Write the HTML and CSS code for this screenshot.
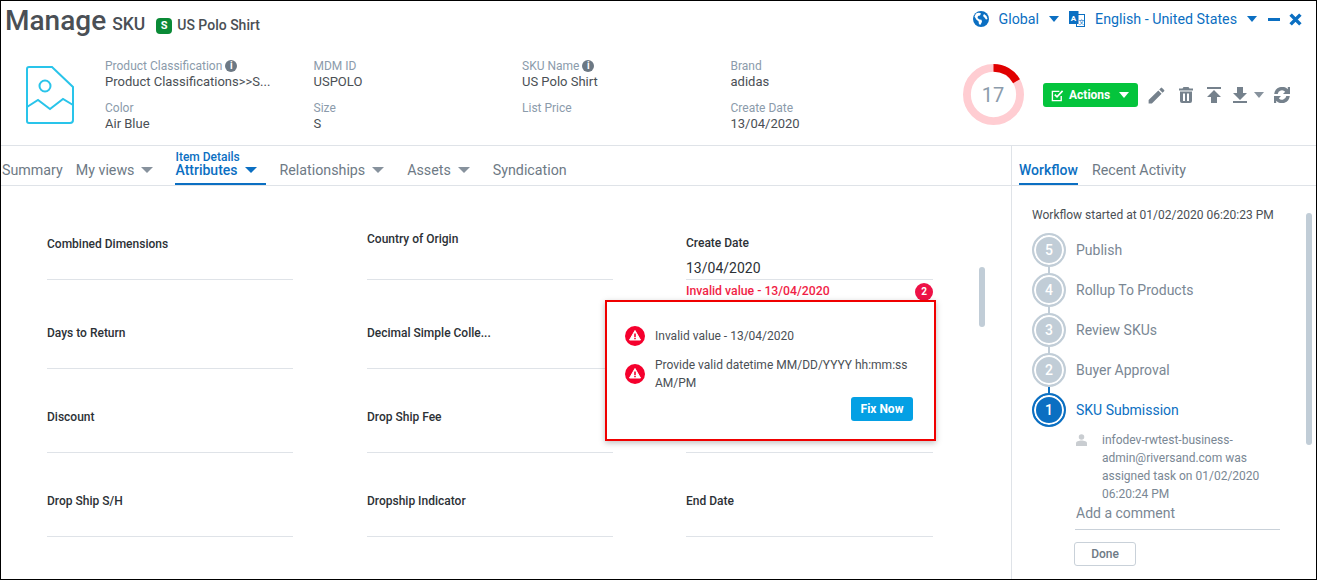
FILE: index.html
```html
<!DOCTYPE html>
<html lang="en">
<head>
<meta charset="utf-8">
<title>Manage SKU</title>
<link rel="stylesheet" href="styles.css">
</head>
<body>
<div class="app">
  <header class="head">
    <div class="title-row">
      <h1 class="title">Manage</h1>
      <span class="entity">SKU</span>
      <span class="type-badge">S</span>
      <span class="item-name">US Polo Shirt</span>
      <div class="context">
        <svg class="ctx-globe" viewBox="0 0 16 16"><circle cx="8" cy="8" r="8" fill="#0b6fc2"/><path d="M3 2.500c2-1.200 4-1 5 0l-1 2-2 .5-.5 2 2 1.500 2 .2.5 2-1.500 3-1.500-.5-.5-3-2-1.500-2-3.200zM11 3l2.500 2 1 3-1.500.5-1.500-2-1.500-1.500z" fill="#fff"/></svg>
        <span class="ctx-text ctx-global">Global</span>
        <span class="caret caret-blue ctx-caret"></span>
        <svg class="ctx-lang" viewBox="0 0 16 16"><rect x="7.500" y="3.500" width="8" height="12" fill="#fff" stroke="#0b6fc2"/><rect x="0" y="0" width="9.500" height="13" fill="#0b6fc2"/><text x="1.800" y="10" class="lang-a">A</text><text x="9.500" y="12.500" class="lang-b">文</text></svg>
        <span class="ctx-text ctx-english">English - United States</span>
        <span class="caret caret-blue ctx-caret2"></span>
        <span class="minimize"></span>
        <svg class="close" viewBox="0 0 12 12"><path d="M1.500 1.500l9 9M10.500 1.500l-9 9" stroke="#0b6fc2" stroke-width="3.200" fill="none"/></svg>
      </div>
    </div>
    <div class="info-row">
      <svg class="file-icon" viewBox="0 0 48 58" fill="none" stroke="#29c4ea" stroke-width="2"><path d="M3 1h23l21 20v33a3 3 0 0 1-3 3H3a2 2 0 0 1-2-2V3a2 2 0 0 1 2-2z"/><circle cx="19" cy="20" r="5.500"/><path d="M1 41l11-7 12 9 13-10 10 6"/></svg>
      <div class="info-grid">
        <div class="field"><div class="lbl">Product Classification <span class="i">i</span></div><div class="val">Product Classifications&gt;&gt;S...</div></div>
        <div class="field"><div class="lbl">MDM ID</div><div class="val">USPOLO</div></div>
        <div class="field"><div class="lbl">SKU Name <span class="i">i</span></div><div class="val">US Polo Shirt</div></div>
        <div class="field"><div class="lbl">Brand</div><div class="val">adidas</div></div>
        <div class="field"><div class="lbl">Color</div><div class="val">Air Blue</div></div>
        <div class="field"><div class="lbl">Size</div><div class="val">S</div></div>
        <div class="field"><div class="lbl">List Price</div><div class="val"></div></div>
        <div class="field"><div class="lbl">Create Date</div><div class="val">13/04/2020</div></div>
      </div>
      <div class="score">
        <svg viewBox="0 0 62 62"><circle cx="31" cy="31" r="27" fill="none" stroke="#ffcdd2" stroke-width="8"/><path d="M31 4A27 27 0 0 1 54.400 17.500" fill="none" stroke="#e00000" stroke-width="8"/></svg>
        <span class="score-num">17</span>
      </div>
      <div class="actions">
        <button class="btn-actions">
          <svg viewBox="0 0 14 14" fill="none" stroke="#fff" stroke-width="1.500"><path d="M11 7.500V12.500H1.500V2.500H9"/><path d="M4 6l2.500 2.500L12.500 2" stroke-width="1.800"/></svg>
          <span>Actions</span>
          <span class="caret caret-white"></span>
        </button>
        <svg class="tool t-edit" viewBox="0 0 24 24"><path d="M3 17.250V21h3.750L17.810 9.940l-3.750-3.750zM20.710 7.040a1 1 0 0 0 0-1.410l-2.340-2.340a1 1 0 0 0-1.410 0l-1.830 1.830 3.750 3.750z"/></svg>
        <svg class="tool t-del" viewBox="0 0 14 16"><path d="M4.500 0h5l1 1.500H14V3.500H0V1.500h3.500zM1 4.500h12V14a2 2 0 0 1-2 2H3a2 2 0 0 1-2-2zM4 6.500V14h2V6.500zM8 6.500V14h2V6.500z" fill-rule="evenodd"/></svg>
        <svg class="tool t-up" viewBox="0 0 14 16"><path d="M0 0h14v2H0zM7 3l7 7H10v6H4v-6H0z"/></svg>
        <svg class="tool t-down" viewBox="0 0 14 16"><path d="M4 0h6v6h4l-7 7-7-7h4zM0 14h14v2H0z"/></svg>
        <span class="caret caret-grey t-caret"></span>
        <svg class="tool t-ref" viewBox="0 0 16 16"><path d="M13.800 2.200V0L16 0v7H9l2.200-2.200A4.300 4.300 0 0 0 3.700 7H.2A8 8 0 0 1 13.800 2.200zM2.200 13.800V16H0V9h7l-2.200 2.200A4.300 4.300 0 0 0 12.300 9h3.500A8 8 0 0 1 2.200 13.800z"/></svg>
      </div>
    </div>
  </header>
  <div class="body">
    <main class="main">
      <nav class="tabs">
        <span class="tab">Summary</span>
        <span class="tab tab-menu">My views<span class="caret caret-grey"></span></span>
        <span class="tab tab-on"><span class="tab-over">Item Details</span>Attributes<span class="caret caret-blue"></span></span>
        <span class="tab tab-menu">Relationships<span class="caret caret-grey"></span></span>
        <span class="tab tab-menu">Assets<span class="caret caret-grey"></span></span>
        <span class="tab">Syndication</span>
      </nav>
      <div class="form-area">
        <div class="form">
          <div class="cell"><div class="flabel l-a">Combined Dimensions</div></div>
          <div class="cell"><div class="flabel l-b">Country of Origin</div></div>
          <div class="cell"><div class="flabel l-c">Create Date</div><div class="fval">13/04/2020</div>
            <div class="err">Invalid value - 13/04/2020<span class="err-count">2</span></div></div>
          <div class="cell"><div class="flabel">Days to Return</div></div>
          <div class="cell"><div class="flabel l-d">Decimal Simple Colle...</div></div>
          <div class="cell"></div>
          <div class="cell"><div class="flabel">Discount</div></div>
          <div class="cell"><div class="flabel">Drop Ship Fee</div></div>
          <div class="cell"></div>
          <div class="cell"><div class="flabel">Drop Ship S/H</div></div>
          <div class="cell"><div class="flabel">Dropship Indicator</div></div>
          <div class="cell"><div class="flabel">End Date</div></div>
        </div>
        <div class="form-scroll"></div>
        <div class="popover">
          <div class="msg">
            <svg class="warn" viewBox="0 0 20 20"><circle cx="10" cy="10" r="10" fill="#f5002d"/><path d="M10 4.500l5.500 9.500h-11z" fill="#fff" stroke="#fff" stroke-linejoin="round"/><path d="M9.200 7.500h1.600v3.500H9.200zM9.200 11.800h1.600v1.400H9.200z" fill="#f5002d"/></svg>
            <span>Invalid value - 13/04/2020</span>
          </div>
          <div class="msg msg2">
            <svg class="warn" viewBox="0 0 20 20"><circle cx="10" cy="10" r="10" fill="#f5002d"/><path d="M10 4.500l5.500 9.500h-11z" fill="#fff" stroke="#fff" stroke-linejoin="round"/><path d="M9.200 7.500h1.600v3.500H9.200zM9.200 11.800h1.600v1.400H9.200z" fill="#f5002d"/></svg>
            <span>Provide valid datetime MM/DD/YYYY hh:mm:ss AM/PM</span>
          </div>
          <div class="pop-foot"><button class="fix">Fix Now</button></div>
        </div>
      </div>
    </main>
    <aside class="side">
      <nav class="side-tabs">
        <span class="stab stab-on">Workflow</span>
        <span class="stab stab-off">Recent Activity</span>
      </nav>
      <div class="side-body">
        <div class="started">Workflow started at 01/02/2020 06:20:23 PM</div>
        <div class="steps">
          <div class="step"><span class="num">5</span><span>Publish</span></div>
          <div class="step"><span class="num">4</span><span>Rollup To Products</span></div>
          <div class="step"><span class="num">3</span><span>Review SKUs</span></div>
          <div class="step"><span class="num">2</span><span>Buyer Approval</span></div>
          <div class="step step-on"><span class="num">1</span><span>SKU Submission</span></div>
        </div>
        <div class="assign">
          <svg class="person" viewBox="0 0 12 13"><circle cx="6" cy="3.200" r="3" fill="#c9cdd1"/><path d="M0 13v-3c0-2 3-3 6-3s6 1 6 3v3z" fill="#c9cdd1"/></svg>
          <p>infodev-rwtest-business-admin@riversand.com was assigned task on 01/02/2020 06:20:24 PM</p>
        </div>
        <div class="comment">Add a comment</div>
        <button class="done">Done</button>
        <div class="side-scroll"></div>
      </div>
    </aside>
  </div>
</div>
</body>
</html>
```

FILE: styles.css
```css
* { box-sizing: border-box; }
html, body { margin: 0; padding: 0; }
body { font-family: Roboto, "Liberation Sans", sans-serif; background: #fff; overflow: hidden; }
.app { width: 1317px; height: 580px; border: 1px solid #000; display: flex; flex-direction: column; overflow: hidden; position: relative; }

.head { height: 145px; border-bottom: 1px solid #dfe3e8; flex: none; }
.title-row { display: flex; align-items: baseline; height: 49px; padding: 0 0 0 4px; }
.title { font-size: 28px; font-weight: 500; color: #4a4f55; margin: 0; line-height: 40px; }
.entity { font-size: 17.500px; font-weight: 500; color: #4a4f55; margin-left: 6px; }
.type-badge { width: 16px; height: 16px; border-radius: 4px; background: #0a8a36; color: #fff; font-size: 11px; font-weight: 700; text-align: center; line-height: 16px; margin-left: 11px; align-self: center; }
.item-name { font-size: 14px; font-weight: 500; color: #4a4f55; margin-left: 5px; }
.context { margin-left: auto; display: flex; align-items: center; align-self: flex-start; height: 35px; padding-right: 14px; }
.ctx-globe { width: 16px; height: 16px; margin-top: 1px; }
.ctx-text { font-size: 14.250px; color: #0b6fc2; }
.ctx-global { margin-left: 10px; }
.ctx-caret { margin-left: 10px; }
.ctx-lang { width: 16px; height: 16px; margin-left: 10px; margin-top: 1px; }
.lang-a { font: 700 8px Roboto, sans-serif; fill: #fff; }
.lang-b { font: 6px "Noto Sans CJK SC", sans-serif; fill: #0b6fc2; }
.ctx-english { margin-left: 10px; }
.ctx-caret2 { margin-left: 10px; }
.minimize { width: 12px; height: 3px; background: #0b6fc2; margin-left: 11px; margin-top: 2px; }
.close { width: 13px; height: 13px; margin-left: 9px; margin-top: 2px; }

.caret { display: inline-block; width: 0; height: 0; border-left: 5px solid transparent; border-right: 5px solid transparent; border-top: 6px solid #8a949e; flex: none; }
.caret-blue { border-top-color: #0b6fc2; }
.caret-white { border-top-color: #fff; }
.caret-grey { border-top-color: #87929d; }

.info-row { display: flex; align-items: flex-start; height: 94px; }
.file-icon { width: 48px; height: 58px; margin: 16px 0 0 25px; flex: none; }
.info-grid { display: grid; grid-template-columns: repeat(4, 208.500px); grid-auto-rows: 42px; margin: 8px 0 0 31px; width: 834px; flex: none; }
.field { font-size: 13px; line-height: 16px; min-width: 0; }
.lbl { color: #8b9bab; font-size: 12px; }
.val { color: #4a4f55; }
.i { display: inline-block; width: 12px; height: 12px; border-radius: 50%; background: #6c7884; color: #fff; font-size: 10px; font-weight: 700; line-height: 12px; text-align: center; vertical-align: 1px; }
.score { position: relative; width: 61px; height: 61px; margin: 14px 0 0 24px; flex: none; }
.score svg { width: 61px; height: 61px; display: block; }
.score-num { position: absolute; inset: 0 1px 0 0; display: flex; align-items: center; justify-content: center; font-size: 20px; color: #8b9bab; }
.actions { display: flex; align-items: center; height: 24px; margin: 33px 0 0 19px; flex: none; }
.btn-actions { width: 95px; height: 24px; background: #04c43c; border: 0; border-radius: 3px; color: #fff; font: 700 12px Roboto, sans-serif; display: flex; align-items: center; padding: 0 0 0 8px; }
.btn-actions svg { width: 13px; height: 13px; margin-right: 5px; flex: none; }
.btn-actions .caret { margin-left: 9px; }
.tool { fill: #75818c; flex: none; }
.t-edit { width: 21px; height: 21px; margin-left: 8px; }
.t-del { width: 14px; height: 16px; margin-left: 12px; }
.t-up { width: 14px; height: 16px; margin-left: 14px; }
.t-down { width: 14px; height: 16px; margin-left: 12px; }
.t-caret { margin-left: 7px; }
.t-ref { width: 16px; height: 16px; margin-left: 10px; }

.body { flex: 1; display: flex; min-height: 0; }
.main { width: 1011px; flex: none; display: flex; flex-direction: column; border-right: 1px solid #dfe3e8; }
.tabs { height: 40px; display: flex; align-items: flex-end; border-bottom: 1px solid #dfe3e8; padding-left: 1px; flex: none; }
.tab { position: relative; font-size: 14.250px; font-weight: 400; color: #6e7a85; height: 39px; display: flex; align-items: center; padding-top: 8px; margin-right: 14px; white-space: nowrap; }
.tab:first-child { margin-right: 13px; }
.tab .caret { margin-left: 7px; border-left-width: 6px; border-right-width: 6px; }
.tab-menu { margin-right: 23px; }
.tab-on { color: #0b6fc2; font-size: 14px; font-weight: 500; border-bottom: 2px solid #0b6fc2; height: 29px; padding-top: 0; margin-left: -1px; margin-right: 14px; padding-right: 9px; }
.tab-over { position: absolute; left: 0; top: -6px; font-size: 12px; line-height: 14px; font-weight: 500; }
.form-area { position: relative; flex: 1; min-height: 0; }
.form { display: grid; grid-template-columns: 320px 319px 247px; padding: 0 0 0 46px; grid-template-rows: 94px 89px 84px 84px; }
.cell { border-bottom: 1px solid #dfe3e8; position: relative; }
.cell:nth-child(3n+1) { margin-right: 74px; }
.cell:nth-child(3n+2) { margin-right: 73px; }
.flabel { font-size: 12px; font-weight: 500; color: #2c3136; position: absolute; left: 0; bottom: 28px; line-height: 14px; }
.l-b { bottom: 33px; }
.l-c { bottom: 29px; }
.fval { position: absolute; left: 0; bottom: 2px; font-size: 14px; color: #2c3136; line-height: 18px; }
.err { position: absolute; left: 0; right: 0; top: 100%; margin-top: 5px; font-size: 12.250px; font-weight: 500; line-height: 14px; color: #f01e46; }
.err-count { position: absolute; right: 0; top: -1px; width: 18px; height: 18px; border-radius: 50%; background: #ee1146; color: #fff; font-size: 10px; font-weight: 700; line-height: 18px; text-align: center; }
.form-scroll { position: absolute; left: 978px; top: 81px; width: 6px; height: 60px; border-radius: 3px; background: #c1cdd7; }
.popover { position: absolute; left: 604px; top: 114px; width: 331px; height: 141px; border: 2px solid #f00000; background: #fff; box-shadow: 0 2px 6px rgba(0,0,0,.25); padding: 24px 18px 0 18px; font-size: 12px; color: #4a4f55; }
.msg { display: flex; align-items: center; gap: 10px; line-height: 18px; }
.msg2 { margin-top: 10px; }
.warn { width: 20px; height: 20px; flex: none; }
.pop-foot { display: flex; justify-content: flex-end; margin-top: 5px; padding-right: 3px; }
.fix { width: 62px; height: 24px; background: #04a0e4; color: #fff; border: 0; border-radius: 3px; font: 700 12px Roboto, sans-serif; padding: 0; }

.side { flex: 1; min-width: 0; display: flex; flex-direction: column; }
.side-tabs { height: 40px; display: flex; align-items: flex-end; gap: 14px; border-bottom: 1px solid #dfe3e8; padding-left: 7px; flex: none; }
.stab { font-size: 14px; color: #6e7a85; height: 29px; line-height: 22px; padding-top: 3px; }
.stab-off { font-size: 14.250px; }
.stab-on { color: #0b6fc2; font-weight: 500; border-bottom: 2px solid #0b6fc2; }
.side-body { position: relative; flex: 1; padding: 22px 0 0 20px; }
.started { font-size: 12px; color: #4a4f55; line-height: 14px; }
.steps { margin-top: 11px; display: flex; flex-direction: column; gap: 6px; }
.step { display: flex; align-items: center; gap: 10px; height: 34px; font-size: 14px; color: #7a8794; position: relative; }
.step + .step::before { content: ""; position: absolute; left: 16px; top: -6px; width: 2px; height: 6px; background: #c1cdd7; }
.num { width: 34px; height: 34px; border-radius: 50%; background: #c1cdd7; border: 2px solid #c1cdd7; box-shadow: inset 0 0 0 2px #fff; color: #fff; font-size: 14px; font-weight: 500; display: flex; align-items: center; justify-content: center; flex: none; }
.step-on { color: #0b6fc2; }
.step-on::before { background: #0b6fc2 !important; }
.step-on .num { background: #0b6fc2; border-color: #0b6fc2; }
.assign { display: flex; margin-top: 4px; padding-left: 44px; }
.person { width: 11px; height: 12px; margin-top: 3px; flex: none; }
.assign p { margin: 0 0 0 15px; width: 165px; font-size: 12px; line-height: 18px; color: #7a8794; }
.comment { margin: 0 0 0 43px; width: 205px; height: 27px; border-bottom: 1px solid #c9d1d9; font-size: 14px; color: #7a8794; line-height: 20px; padding-left: 1px; }
.done { display: block; margin: 12px 0 0 42px; width: 62px; height: 24px; background: #fff; border: 1px solid #c9d1d9; border-radius: 3px; font: 500 12px Roboto, sans-serif; color: #6e7a85; padding: 0; }
.side-scroll { position: absolute; left: 294px; top: 27px; width: 6px; height: 232px; border-radius: 3px; background: #c1cdd7; }
```
